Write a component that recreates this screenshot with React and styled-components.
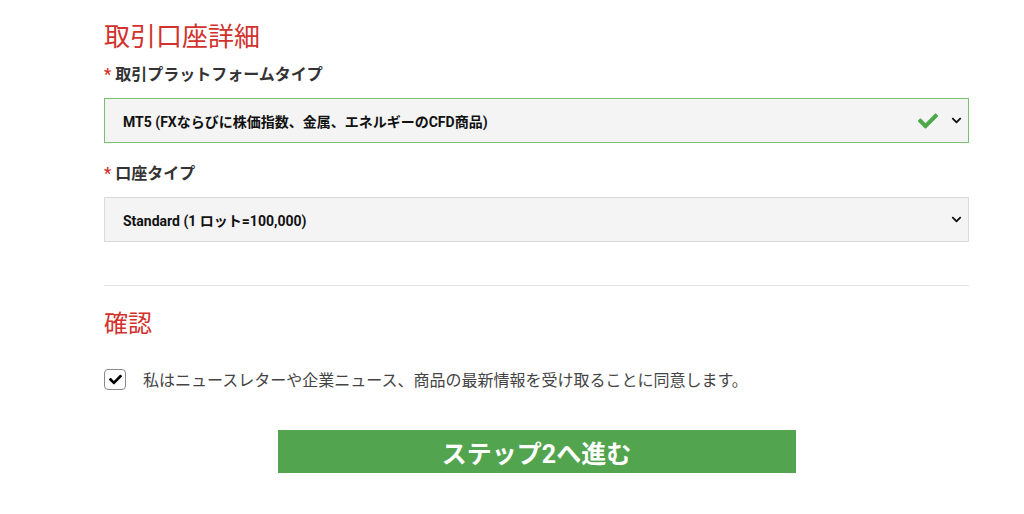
import React from 'react'
import styled, { createGlobalStyle } from 'styled-components'
import { FaCheck, FaChevronDown } from 'react-icons/fa'

const GlobalStyle = createGlobalStyle`
  body {
    margin: 0;
    background: #fff;
    font-family: Roboto, "Noto Sans CJK JP", sans-serif;
  }
`

const Page = styled.div`
  width: 865px;
  padding: 22px 0 40px 104px;
`

const SectionTitle = styled.h2`
  margin: 0;
  font-size: ${p => p.size || 26}px;
  line-height: 30px;
  font-weight: 400;
  color: #d2322d;
`

const Field = styled.div`
  margin-top: ${p => p.top}px;
`

const Label = styled.div`
  font-size: 16px;
  line-height: 20px;
  font-weight: 700;
  color: #333;
  span {
    color: #d2322d;
    margin-right: 4px;
  }
`

const Select = styled.div`
  margin-top: 13px;
  height: 45px;
  box-sizing: border-box;
  display: flex;
  align-items: center;
  padding: 0 6px 0 18px;
  background: #f4f4f4;
  border: 1px solid ${p => (p.valid ? '#78bf72' : '#d9d9d9')};
  font-size: 14px;
  font-weight: 700;
  color: #111;
`

const Value = styled.div`
  flex: 1;
`

const ValidMark = styled(FaCheck)`
  color: #4ea84a;
  font-size: 20px;
  margin-right: 13px;
`

const Chevron = styled(FaChevronDown)`
  color: #111;
  font-size: 11px;
`

const Divider = styled.hr`
  margin: 43px 0 0;
  border: 0;
  border-top: 1px solid #e6e6e6;
`

const CheckRow = styled.label`
  margin-top: 28px;
  display: flex;
  align-items: center;
  gap: 17px;
  font-size: 16px;
  color: #444;
`

const Box = styled.span`
  width: 22px;
  height: 21px;
  box-sizing: border-box;
  border: 1px solid #8a8a8a;
  border-radius: 4px;
  display: flex;
  align-items: center;
  justify-content: center;
  color: #000;
  font-size: 13px;
`

const Submit = styled.button`
  display: block;
  margin: 39px auto 0;
  width: 518px;
  height: 43px;
  border: 0;
  background: #53a44f;
  color: #fff;
  font-family: Roboto, "Noto Sans CJK JP", sans-serif;
  font-size: 25px;
  font-weight: 700;
`

export default function App() {
  return (
    <>
      <GlobalStyle />
      <Page>
        <SectionTitle>取引口座詳細</SectionTitle>
        <Field top={13}>
          <Label><span>*</span>取引プラットフォームタイプ</Label>
          <Select valid>
            <Value>MT5 (FXならびに株価指数、金属、エネルギーのCFD商品)</Value>
            <ValidMark />
            <Chevron />
          </Select>
        </Field>
        <Field top={21}>
          <Label><span>*</span>口座タイプ</Label>
          <Select>
            <Value>Standard (1 ロット=100,000)</Value>
            <Chevron />
          </Select>
        </Field>
        <Divider />
        <Field top={23}>
          <SectionTitle size={24}>確認</SectionTitle>
        </Field>
        <CheckRow>
          <Box><FaCheck /></Box>
          私はニュースレターや企業ニュース、商品の最新情報を受け取ることに同意します。
        </CheckRow>
        <Submit>ステップ2へ進む</Submit>
      </Page>
    </>
  )
}
